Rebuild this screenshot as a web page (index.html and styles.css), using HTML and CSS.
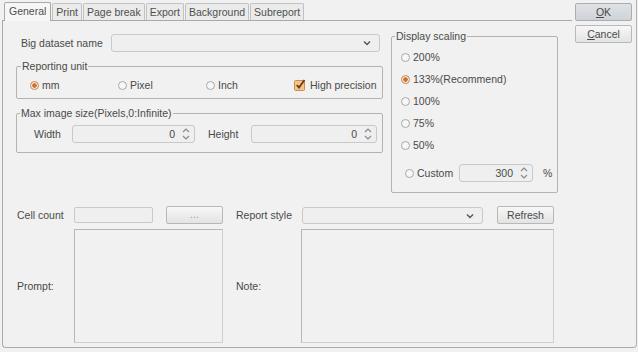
FILE: index.html
```html
<!DOCTYPE html>
<html lang="en">
  <head>
    <meta charset="UTF-8" />
    <title>Report properties</title>
    <link rel="stylesheet" href="styles.css">
  </head>
  <body>
    <div class="dialog">
      <div class="main">
        <div class="tabs">
          <span class="tab active">General</span>
          <span class="tab">Print</span>
          <span class="tab">Page break</span>
          <span class="tab">Export</span>
          <span class="tab">Background</span>
          <span class="tab">Subreport</span>
        </div>

        <div class="panel">
          <div class="upper">
            <div class="left-col">
              <div class="dataset">
                <span class="dataset-lbl">Big dataset name</span>
                <div class="combo dataset-combo">
                  <svg class="drop" width="8" height="6" viewBox="0 0 8 6"><path d="M1 1.5 L4 4.5 L7 1.5" fill="none" stroke="#555" stroke-width="1.4"/></svg>
                </div>
              </div>

              <fieldset class="group unit">
                <legend>Reporting unit</legend>
                <div class="options">
                  <span class="opt"><i class="radio on"></i>mm</span>
                  <span class="opt"><i class="radio"></i>Pixel</span>
                  <span class="opt"><i class="radio"></i>Inch</span>
                  <span class="opt">
                    <svg class="check" width="12" height="12" viewBox="0 0 12 12">
                      <rect x="0.5" y="1.5" width="10" height="10" rx="1" fill="#f3c48f" stroke="#cf8c47"/>
                      <path d="M2.8 6 L5 8.6 L10.5 1" fill="none" stroke="#6a3a12" stroke-width="1.8"/>
                    </svg>High precision
                  </span>
                </div>
              </fieldset>

              <fieldset class="group imgsize">
                <legend>Max image size(Pixels,0:Infinite)</legend>
                <div class="sizes">
                  <span class="w-lbl">Width</span>
                  <div class="spin w-spin"><span class="val">0</span><svg class="updown" width="8" height="14" viewBox="0 0 8 14"><path d="M1 5 L4 2 L7 5 M1 9 L4 12 L7 9" fill="none" stroke="#8a8a8a" stroke-width="1.2"/></svg></div>
                  <span class="h-lbl">Height</span>
                  <div class="spin h-spin"><span class="val">0</span><svg class="updown" width="8" height="14" viewBox="0 0 8 14"><path d="M1 5 L4 2 L7 5 M1 9 L4 12 L7 9" fill="none" stroke="#8a8a8a" stroke-width="1.2"/></svg></div>
                </div>
              </fieldset>
            </div>

            <fieldset class="group scaling">
              <legend>Display scaling</legend>
              <div class="scale-opt"><i class="radio"></i>200%</div>
              <div class="scale-opt"><i class="radio on"></i>133%(Recommend)</div>
              <div class="scale-opt"><i class="radio"></i>100%</div>
              <div class="scale-opt"><i class="radio"></i>75%</div>
              <div class="scale-opt"><i class="radio"></i>50%</div>
              <div class="custom">
                <span class="custom-lbl"><i class="radio"></i>Custom</span>
                <div class="spin custom-spin"><span class="val">300</span><svg class="updown" width="8" height="14" viewBox="0 0 8 14"><path d="M1 5 L4 2 L7 5 M1 9 L4 12 L7 9" fill="none" stroke="#8a8a8a" stroke-width="1.2"/></svg></div>
                <span class="pct">%</span>
              </div>
            </fieldset>
          </div>

          <div class="lower">
            <span class="lbl">Cell count</span>
            <div class="cell">
              <div class="field cell-input"></div>
              <span class="btn dots">...</span>
            </div>
            <span class="lbl lbl-right">Report style</span>
            <div class="cell">
              <div class="combo style-combo">
                <svg class="drop" width="8" height="6" viewBox="0 0 8 6"><path d="M1 1.5 L4 4.5 L7 1.5" fill="none" stroke="#555" stroke-width="1.4"/></svg>
              </div>
              <span class="btn refresh">Refresh</span>
            </div>
            <span class="lbl">Prompt:</span>
            <div class="memo"></div>
            <span class="lbl lbl-right">Note:</span>
            <div class="memo"></div>
          </div>
        </div>
      </div>

      <div class="side">
        <span class="btn ok"><u>O</u>K</span>
        <span class="btn cancel"><u>C</u>ancel</span>
      </div>
    </div>
  </body>
</html>
```

FILE: styles.css
```css
* {
  margin: 0;
  padding: 0;
  box-sizing: border-box;
  font: 10.5px "Liberation Sans", Arial, sans-serif;
}

body {
  background: #f0f1f0;
  color: #4a4a4a;
}

.dialog {
  display: flex;
  width: 638px;
  height: 348px;
}

.main {
  display: flex;
  flex-direction: column;
  width: 570px;
  margin-left: 2px;
}

/* tab strip */
.tabs {
  display: flex;
  align-items: flex-end;
  height: 20px;
  padding-left: 2px;
}

.tab {
  height: 17px;
  line-height: 16px;
  padding: 0 3px;
  margin-right: 1px;
  background: #eaebea;
  border: 1px solid #c2c2c2;
  border-bottom: none;
  border-radius: 2px 2px 0 0;
  color: #505050;
}

.tab.active {
  position: relative;
  z-index: 1;
  height: 19px;
  line-height: 17px;
  padding: 0 4px;
  margin-bottom: -1px;
  background: #f5f6f5;
  border-color: #a9a9a9;
}

.panel {
  flex: 1;
  border: 1px solid #a9a9a9;
  border-right: none;
  border-radius: 0 0 0 4px;
  padding: 13px 0 0 13px;
}

.side {
  width: 65px;
  border-right: 1px solid #b0b0b0;
  border-bottom: 1px solid #a9a9a9;
  border-radius: 0 0 4px 0;
  padding: 3px 0 0 3px;
  display: flex;
  flex-direction: column;
  gap: 4px;
}

/* generic controls */
.btn {
  display: block;
  height: 18px;
  line-height: 16px;
  text-align: center;
  background: linear-gradient(#f7f7f7, #e2e3e3);
  border: 1px solid #b8b8b8;
  border-radius: 2px;
  color: #4a4a4a;
}

.btn u {
  text-decoration: underline;
}

.side .btn {
  width: 57px;
}

.side .ok {
  background: linear-gradient(#dfe2e5, #cfd3d7);
  border-color: #aaaeb2;
}

.combo {
  position: relative;
  height: 18px;
  background: #eeefee;
  border: 1px solid #c8c9c8;
  border-radius: 3px;
}

.drop {
  position: absolute;
  right: 8px;
  top: 5px;
}

.field {
  height: 16px;
  background: #eeefee;
  border: 1px solid #c8c9c8;
  border-radius: 2px;
}

.spin {
  display: flex;
  align-items: center;
  justify-content: flex-end;
  height: 18px;
  padding-right: 4px;
  background: #eeefee;
  border: 1px solid #c8c9c8;
  border-radius: 3px;
}

.spin .val {
  margin-right: 7px;
}

.radio {
  display: inline-block;
  width: 9px;
  height: 9px;
  border: 1px solid #a8a8a8;
  border-radius: 50%;
  background: #f7f7f7;
  margin-right: 3px;
}

.radio.on {
  border-color: #c48252;
  background: radial-gradient(circle, #d2702c 0, #d2702c 2px, #fbeee2 2.5px);
}

.group {
  border: 1px solid #b3b3b3;
  border-radius: 2px;
}

.group legend {
  padding: 0 1px;
  line-height: 13px;
}

/* upper section */
.upper {
  display: flex;
  height: 159px;
}

.left-col {
  width: 367px;
}

.dataset {
  display: flex;
  align-items: center;
  height: 18px;
}

.dataset-lbl {
  width: 95px;
  padding-left: 5px;
}

.dataset-combo {
  width: 269px;
}

.unit {
  margin-top: 8px;
  padding: 4px 0 5px 13px;
}

.unit legend {
  margin-left: -9px;
}

.options {
  display: flex;
  height: 16px;
}

.opt {
  display: flex;
  align-items: center;
  width: 88px;
}

.opt:last-child {
  width: auto;
}

.check {
  margin-right: 4px;
}

.imgsize {
  margin-top: 8px;
  padding: 5px 0 9px 17px;
}

.imgsize legend {
  margin-left: -14px;
}

.sizes {
  display: flex;
  align-items: center;
}

.w-lbl {
  width: 38px;
}

.w-spin {
  width: 123px;
}

.h-lbl {
  width: 56px;
  padding-left: 13px;
}

.h-spin {
  width: 126px;
}

.scaling {
  width: 167px;
  margin: -4px 0 0 8px;
  padding: 3px 0 10px 9px;
}

.scaling legend {
  margin-left: -6px;
}

.scale-opt {
  display: flex;
  align-items: center;
  height: 22px;
}

.custom {
  display: flex;
  align-items: center;
  height: 18px;
  margin-top: 8px;
  padding-left: 4px;
}

.custom-lbl {
  display: flex;
  align-items: center;
  width: 54px;
}

.custom-spin {
  width: 74px;
}

.pct {
  margin-left: 10px;
}

/* lower section */
.lower {
  display: grid;
  grid-template-columns: 58px 149px 78px 253px;
  grid-template-rows: 18px 114px;
  row-gap: 5px;
  margin-top: 13px;
}

.lbl {
  align-self: center;
  padding-left: 1px;
}

.lbl-right {
  padding-left: 13px;
}

.cell {
  display: flex;
  align-items: center;
}

.cell-input {
  width: 79px;
}

.dots {
  width: 57px;
  margin-left: 13px;
  color: #999;
  line-height: 14px;
}

.style-combo {
  width: 181px;
  height: 17px;
  margin-left: 1px;
}

.refresh {
  width: 57px;
  margin-left: 14px;
}

.memo {
  border: 1px solid #b6b6b6;
  border-right-color: #cfcfcf;
  border-bottom-color: #cfcfcf;
}
```
